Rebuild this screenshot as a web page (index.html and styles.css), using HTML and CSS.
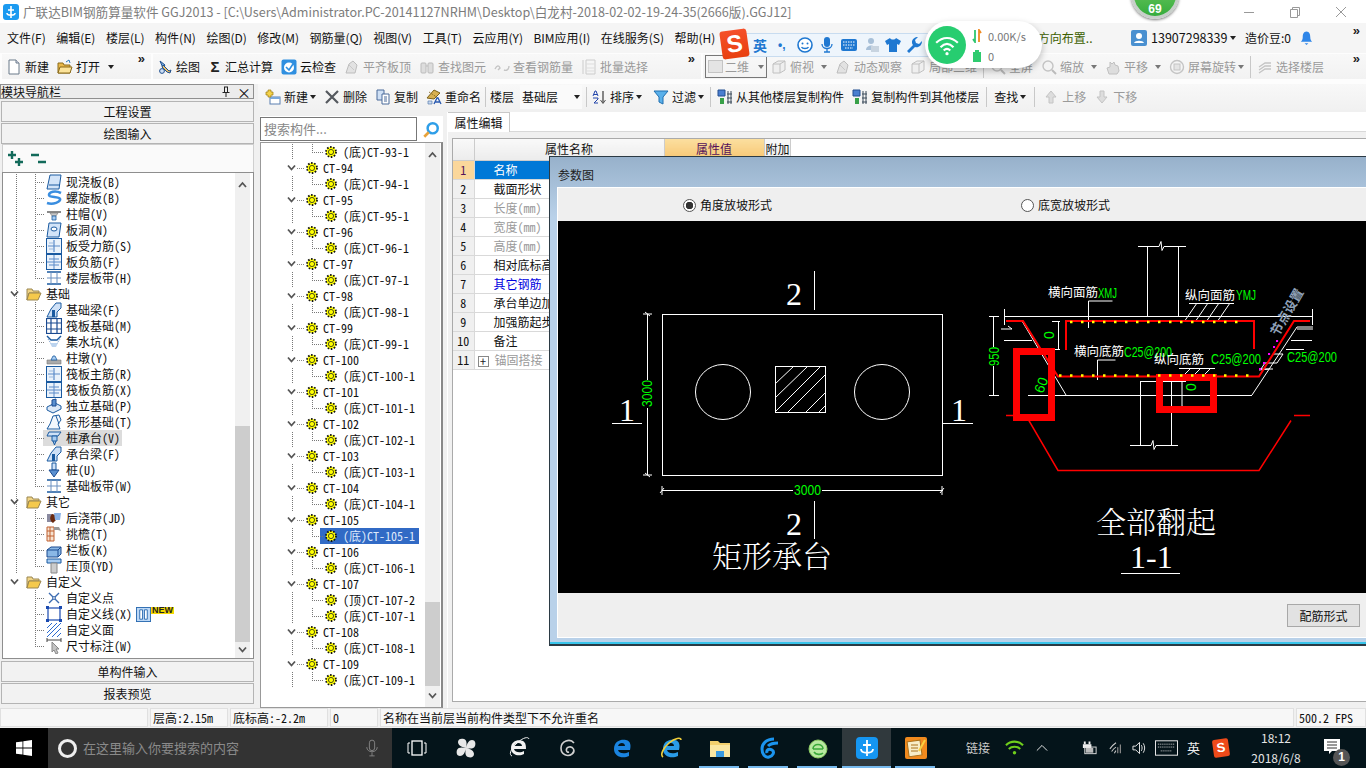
FILE: index.html
```html
<!DOCTYPE html>
<html lang="zh-CN">
<head>
<meta charset="utf-8">
<title>广联达BIM钢筋算量软件 GGJ2013</title>
<link rel="stylesheet" href="styles.css">
</head>
<body>
<svg class="defs" aria-hidden="true">
  <symbol id="i-doc" viewBox="0 0 16 16"><path d="M3 1h7l3 3v11H3z" fill="#fff" stroke="#6a7a8a"/><path d="M10 1v3h3" fill="#dde" stroke="#6a7a8a"/></symbol>
  <symbol id="i-open" viewBox="0 0 16 16"><path d="M1 4h5l1 2h6v8H1z" fill="#e8b84a" stroke="#8a6a1a"/><path d="M3 8h12l-2 6H1z" fill="#fbe39a" stroke="#8a6a1a"/><path d="M9 3l3-2 1 3" fill="none" stroke="#2a7ac0"/></symbol>
  <symbol id="i-draw" viewBox="0 0 16 16"><path d="M3 2l5 4-2 3z" fill="#7ab0e0" stroke="#1f4f8f"/><path d="M6 6l6 6 2-1-1 3-3-1-5-5z" fill="#f0c060" stroke="#1f4f8f"/><circle cx="5" cy="12" r="2.4" fill="#cfe0f5" stroke="#1f4f8f"/></symbol>
  <symbol id="i-cloud" viewBox="0 0 16 16"><rect x=".5" y=".5" width="15" height="15" rx="2" fill="#2f8fe0"/><circle cx="8" cy="8.5" r="5" fill="#fff"/><path d="M5 8l3 3 4-6" fill="none" stroke="#2f8fe0" stroke-width="1.6"/></symbol>
  <symbol id="i-gray" viewBox="0 0 16 16"><path d="M2 14l3-9 4-3 4 4-2 8z" fill="#e2e2e2" stroke="#bdbdbd"/><path d="M5 6l5 5" stroke="#c8c8c8"/></symbol>
  <symbol id="i-bino" viewBox="0 0 16 16"><rect x="2" y="4" width="5" height="10" rx="1" fill="#ddd" stroke="#bbb"/><rect x="9" y="4" width="5" height="10" rx="1" fill="#ddd" stroke="#bbb"/><path d="M7 7h2" stroke="#bbb"/></symbol>
  <symbol id="i-steel" viewBox="0 0 16 16"><path d="M1 10c2-4 4-4 5-1l-2 2M10 11c2 1 5 0 5-4" fill="none" stroke="#c4c4c4" stroke-width="1.4"/></symbol>
  <symbol id="i-batch" viewBox="0 0 16 16"><path d="M2 1v14M5 1h9v14H5z" fill="none" stroke="#ccc"/><path d="M5 5h9M5 9h9M5 12h9" stroke="#ddd"/></symbol>
  <symbol id="i-cube" viewBox="0 0 16 16"><path d="M2 5l5-3h7v9l-5 3H2z" fill="#efefef" stroke="#c0c0c0"/><path d="M2 5h7v9M9 5l5-3" fill="none" stroke="#c0c0c0"/></symbol>
  <symbol id="i-zoom" viewBox="0 0 16 16"><circle cx="7" cy="7" r="5" fill="#f4f4f4" stroke="#c4c4c4" stroke-width="1.4"/><path d="M11 11l4 4" stroke="#bbb" stroke-width="2"/></symbol>
  <symbol id="i-hand" viewBox="0 0 16 16"><path d="M4 15l-2-6 3-1V3l2 2 2-2 1 3 3 1 1 5-2 3z" fill="#ddd" stroke="#c0c0c0"/></symbol>
  <symbol id="i-rot" viewBox="0 0 16 16"><circle cx="8" cy="8" r="6.5" fill="none" stroke="#c4c4c4" stroke-width="1.4"/><rect x="5" y="5" width="6" height="6" fill="#e4e4e4" stroke="#c4c4c4"/></symbol>
  <symbol id="i-floor" viewBox="0 0 16 16"><path d="M2 8l6-4 6 0M2 11l6-4 6 0M2 14l6-4 6 0" fill="none" stroke="#c4c4c4" stroke-width="1.3"/></symbol>
  <symbol id="i-new" viewBox="0 0 16 16"><rect x="5" y="8" width="10" height="7" fill="#fff" stroke="#5a7fb0"/><path d="M5 8h10v2H5z" fill="#7aa8dc"/><path d="M3 1h3v2h2v3H6v2H3V6H1V3h2z" fill="#f4d24a" stroke="#9a7a10" stroke-width=".7"/></symbol>
  <symbol id="i-del" viewBox="0 0 16 16"><path d="M2 2l12 12M14 2L2 14" stroke="#55595f" stroke-width="2.2"/></symbol>
  <symbol id="i-copy" viewBox="0 0 16 16"><path d="M2 1h7v10H2z" fill="#cfe0f5" stroke="#4a6a9a"/><path d="M7 5h7v10H7z" fill="#fff" stroke="#4a6a9a"/><path d="M9 8h3M9 10h3M9 12h3" stroke="#4a6a9a"/></symbol>
  <symbol id="i-rename" viewBox="0 0 16 16"><path d="M1 9l7-8 6 3-6 6z" fill="#d8b050" stroke="#7a6018"/><path d="M3 3l9 6" stroke="#7a6018" stroke-dasharray="1 1"/><path d="M8 15l3-6h1l3 6M9.500 13h4" fill="none" stroke="#2a5ab0" stroke-width="1.300"/><path d="M2 15h4v-3H2z" fill="#c8d8ee" stroke="#5a7fb0" stroke-width=".7"/></symbol>
  <symbol id="i-sort" viewBox="0 0 16 16"><path d="M12 2v12" stroke="#555" stroke-width="1.4"/><path d="M9.5 11l2.5 3.5 2.5-3.5" fill="none" stroke="#555"/><path d="M2 7l2-5h1l2 5M3 5.5h3M2 9h5v1l-4 4h4" fill="none" stroke="#2244aa"/></symbol>
  <symbol id="i-filter" viewBox="0 0 16 16"><path d="M1 2h14L10 8v7l-4-2V8z" fill="#5ab0ea" stroke="#1f6fb0"/></symbol>
  <symbol id="i-floorcopy" viewBox="0 0 16 16"><path d="M1 1h7v6H1z" fill="#4a7fd0" stroke="#234e90"/><path d="M3 9h4v6H3z" fill="#38a048"/><path d="M11 2v13M14 2v13M10 5h5M10 9h5M10 13h5" stroke="#3a4a5a" fill="none"/></symbol>
  <symbol id="i-up" viewBox="0 0 16 16"><path d="M8 2l5 6h-3v6H6V8H3z" fill="#ddd" stroke="#c4c4c4"/></symbol>
  <symbol id="i-down" viewBox="0 0 16 16"><path d="M8 14l5-6h-3V2H6v6H3z" fill="#ddd" stroke="#c4c4c4"/></symbol>
  <symbol id="i-user" viewBox="0 0 16 16"><rect width="16" height="16" rx="2" fill="#4a90d0"/><circle cx="8" cy="6" r="3" fill="#fff"/><path d="M3 13c1-3 9-3 10 0z" fill="#fff"/></symbol>
  <symbol id="i-bell" viewBox="0 0 16 16"><path d="M8 1c3 0 4 3 4 6s1 4 2 5H2c1-1 2-2 2-5s1-6 4-6z" fill="#2f86e8"/><path d="M6 13.500h4l-2 2z" fill="#2f86e8"/></symbol>
  <symbol id="i-search" viewBox="0 0 16 16"><circle cx="9.500" cy="6.500" r="4.500" fill="#fff" stroke="#2e9ee8" stroke-width="2.200"/><path d="M6 10l-4 4" stroke="#e8a23a" stroke-width="2.400"/></symbol>
  <symbol id="i-plus" viewBox="0 0 16 16"><path d="M4 0v8M0 4h8M11 7v8M7 11h8" stroke="#126a5a" stroke-width="2.400"/></symbol>
  <symbol id="i-minus" viewBox="0 0 16 16"><path d="M0 4h8M7 11h8" stroke="#126a5a" stroke-width="2.400"/></symbol>
  <symbol id="i-folder" viewBox="0 0 16 16"><path d="M1 3h5l1 2h6v2H3l-2 7z" fill="#f0d486" stroke="#9a8650"/><path d="M3 7h12l-3 7H1z" fill="#f5c94c" stroke="#9a8650"/></symbol>
  <symbol id="i-gear" viewBox="0 0 12 12"><circle cx="6" cy="6" r="5" fill="#ff0" stroke="#111" stroke-width="1.800" stroke-dasharray="1.600 1.540"/><circle cx="6" cy="6" r="2.600" fill="#ff0" stroke="#222" stroke-width=".8"/></symbol>
  <symbol id="t-slab" viewBox="0 0 16 16"><path d="M4 1h11l-2 14H1z" fill="#d3e4f8" stroke="#1a5aa0"/><path d="M3 11h11" stroke="#1a5aa0"/></symbol>
  <symbol id="t-spiral" viewBox="0 0 16 16"><path d="M15 3C9 0 3 2 3 5s10 1 11 4-7 6-13 4" fill="none" stroke="#3a8ee0" stroke-width="2.600"/></symbol>
  <symbol id="t-cap" viewBox="0 0 16 16"><path d="M1 5h14v2H1z" fill="#8a8a8a"/><path d="M4 7h8l-2 3H6z" fill="#c8c8c8" stroke="#777" stroke-width=".6"/><path d="M6 10h4v4H6z" fill="#a9cdf2" stroke="#1a5aa0" stroke-width=".8"/></symbol>
  <symbol id="t-hole" viewBox="0 0 16 16"><path d="M3 1h12l-2 14H1z" fill="#d3e4f8" stroke="#1a5aa0"/><ellipse cx="8" cy="7" rx="3" ry="2" fill="#fff" stroke="#1a5aa0"/></symbol>
  <symbol id="t-bar" viewBox="0 0 16 16"><rect x=".5" y=".5" width="15" height="15" fill="#eaf2fb" stroke="#1a5aa0"/><path d="M8 2v12M2 8h12" stroke="#5a8ac8" stroke-width="1.200"/><path d="M3 5h4M3 11h4" stroke="#9ab8dc"/></symbol>
  <symbol id="t-neg" viewBox="0 0 16 16"><rect x=".5" y=".5" width="15" height="15" fill="#eaf2fb" stroke="#1a5aa0"/><path d="M8 1v14M1 8h14M3 5h10M3 11h10" stroke="#5a8ac8"/></symbol>
  <symbol id="t-band" viewBox="0 0 16 16"><path d="M1 2h14M1 14h14" stroke="#1a5aa0" stroke-width="1.400"/><path d="M5 2v12M11 2v12M1 8h14" stroke="#6a90c0"/></symbol>
  <symbol id="t-beam" viewBox="0 0 16 16"><path d="M1 15l4-8 5-6h5v5l-4 4v5H1z" fill="#cfe1f7" stroke="#1a5aa0"/><path d="M6 8h3v7H6z" fill="#1a5aa0"/></symbol>
  <symbol id="t-raft" viewBox="0 0 16 16"><rect x=".5" y=".5" width="15" height="15" fill="#fff" stroke="#1a4a90" stroke-width="1.200"/><path d="M1 5h14M1 11h14M5 1v14M11 1v14" stroke="#1a4a90" stroke-width="1.200"/></symbol>
  <symbol id="t-pit" viewBox="0 0 16 16"><path d="M1 2l4 4h6l4-4" fill="none" stroke="#1a5aa0" stroke-width="1.400"/><path d="M2 5l4 6h4l4-6" fill="none" stroke="#7aa0d0" stroke-dasharray="1.500 1"/><path d="M4 9l2 4h4l2-4" fill="#bcd4ef"/></symbol>
  <symbol id="t-pier" viewBox="0 0 16 16"><path d="M1 10h14v4H1z" fill="#aaa" stroke="#777" stroke-width=".6"/><path d="M5 10l2-4h2l2 4z" fill="#a9cdf2" stroke="#1a5aa0" stroke-width=".8"/></symbol>
  <symbol id="t-iso" viewBox="0 0 16 16"><path d="M1 9l8-4 6 3v3l-8 4-6-3z" fill="#dce9f8" stroke="#1a5aa0"/><path d="M6 8V2l4-1v7z" fill="#5a90d0" stroke="#1a4a90"/></symbol>
  <symbol id="t-strip" viewBox="0 0 16 16"><path d="M1 15l3-5 3-8 6-1 2 5-3 4 2 5z" fill="#f2f7fd" stroke="#1a5aa0"/><path d="M10 2l3 8" stroke="#1a5aa0"/></symbol>
  <symbol id="t-pilecap" viewBox="0 0 16 16"><path d="M3 2h12l-3 4H1z" fill="#cfe1f7" stroke="#1a5aa0"/><path d="M6 6h5v5H6zM7 11l1.500 4 1.500-4" fill="#a9cdf2" stroke="#1a5aa0"/></symbol>
  <symbol id="t-pile" viewBox="0 0 16 16"><path d="M6 1h4v7H6z" fill="#cfe1f7" stroke="#1a5aa0"/><path d="M3 8h10l-5 7z" fill="#5a90d0" stroke="#1a4a90"/></symbol>
  <symbol id="t-post" viewBox="0 0 16 16"><path d="M1 4h6v8H1z" fill="#8a8aa0"/><path d="M6 4c-3 3-2 7 1 9l3-3V5z" fill="#6a2a10"/><path d="M8 3h7l-1 7H9z" fill="#8ab2e6"/></symbol>
  <symbol id="t-eave" viewBox="0 0 16 16"><path d="M1 1h7v14H1z" fill="#f6e2d0" stroke="#c06030"/><path d="M1 5h7M1 10h7M4 1v14" stroke="#c06030"/><path d="M8 1h5l2 4-3-1H8z" fill="#999"/></symbol>
  <symbol id="t-rail" viewBox="0 0 16 16"><path d="M1 8l4-3h10v7l-3 3H1z" fill="#8ab8e6" stroke="#1a4a90"/><path d="M1 8h11v7M12 8l3-3" fill="none" stroke="#1a4a90"/></symbol>
  <symbol id="t-top" viewBox="0 0 16 16"><path d="M1 1h14v4H1z" fill="#a9cdf2" stroke="#1a5aa0"/><path d="M5 5h6v10H5z" fill="#ccc" stroke="#888"/></symbol>
  <symbol id="t-point" viewBox="0 0 16 16"><path d="M3 3l10 10M13 3L3 13" stroke="#3a6ab0" stroke-width="1.400"/><circle cx="8" cy="8" r="1.400" fill="#fff" stroke="#3a6ab0"/></symbol>
  <symbol id="t-line" viewBox="0 0 16 16"><rect x="2" y="2" width="12" height="12" fill="none" stroke="#1a4ab0" stroke-width="1.200"/><path d="M0 0h3v3H0zM13 0h3v3h-3zM0 13h3v3H0zM13 13h3v3h-3z" fill="#1a4ab0"/></symbol>
  <symbol id="t-face" viewBox="0 0 16 16"><path d="M1 6l5-5M1 11L11 1M1 15L15 1M6 15l9-9M11 15l4-4" stroke="#2a6ad0"/></symbol>
  <symbol id="t-dim" viewBox="0 0 16 16"><path d="M1 2h14M1 0v4M15 0v4" stroke="#444"/><path d="M6 4l7 7-3 0 2 4-2 1-2-4-2 2z" fill="#c4c4c4" stroke="#888"/></symbol>
  <symbol id="chev" viewBox="0 0 9 8"><path d="M1 1.500l3.500 4 3.500-4" fill="none" stroke="#555" stroke-width="1.800"/></symbol>
  <symbol id="sb-up" viewBox="0 0 9 8"><path d="M1 6l3.500-4 3.500 4" fill="none" stroke="#555" stroke-width="1.800"/></symbol>
</svg>

<div class="app">
  <header class="titlebar">
    <svg class="app-icon" viewBox="0 0 16 16"><rect width="16" height="16" rx="3" fill="#1b9af0"/><path d="M8 2v12M4 9c0 3 8 3 8 0M5 6h6" fill="none" stroke="#fff" stroke-width="1.600"/></svg>
    <span class="title-text">广联达BIM钢筋算量软件 GGJ2013 - [C:\Users\Administrator.PC-20141127NRHM\Desktop\白龙村-2018-02-02-19-24-35(2666版).GGJ12]</span>
    <div class="win-controls">
      <svg viewBox="0 0 12 12"><path d="M1 6.500h10" stroke="#999"/></svg>
      <svg viewBox="0 0 12 12"><path d="M1.500 3.500h7v8h-7zM3.500 3.500v-2h7v8h-2" fill="none" stroke="#999"/></svg>
      <svg viewBox="0 0 12 12"><path d="M1 1l10 10M11 1L1 11" stroke="#999"/></svg>
    </div>
  </header>

  <nav class="menubar">
    <span>文件(F)</span><span>编辑(E)</span><span>楼层(L)</span><span>构件(N)</span><span>绘图(D)</span><span>修改(M)</span><span>钢筋量(Q)</span><span>视图(V)</span><span>工具(T)</span><span>云应用(Y)</span><span>BIM应用(I)</span><span>在线服务(S)</span><span>帮助(H)</span>
    <span class="menu-green">方向布置..</span>
    <span class="menu-acct"><svg class="ico"><use href="#i-user"/></svg>13907298339<i class="caret"></i></span>
    <span class="menu-beans">造价豆:0</span>
    <svg class="ico menu-bell"><use href="#i-bell"/></svg>
    <span class="more">»</span>
  </nav>

  <div class="toolbars">
    <div class="tgroup tg-file">
      <span class="tool"><svg class="ico"><use href="#i-doc"/></svg>新建</span>
      <span class="tool"><svg class="ico"><use href="#i-open"/></svg>打开<i class="caret"></i></span>
      <span class="more">»</span>
    </div>
    <div class="tgroup tg-main">
      <span class="tool"><svg class="ico"><use href="#i-draw"/></svg>绘图</span>
      <span class="tool"><span class="sigma">Σ</span>汇总计算</span>
      <span class="tool"><svg class="ico"><use href="#i-cloud"/></svg>云检查</span>
      <span class="tool off"><svg class="ico"><use href="#i-gray"/></svg>平齐板顶</span>
      <span class="tool off"><svg class="ico"><use href="#i-bino"/></svg>查找图元</span>
      <span class="tool off"><svg class="ico"><use href="#i-steel"/></svg>查看钢筋量</span>
      <span class="tool off"><svg class="ico"><use href="#i-batch"/></svg>批量选择</span>
      <span class="more">»</span>
    </div>
    <div class="tgroup tg-view">
      <span class="view-select"><i class="view-swatch"></i>二维<i class="caret gray"></i></span>
      <span class="tool off"><svg class="ico"><use href="#i-cube"/></svg>俯视<i class="caret gray wide"></i></span>
      <span class="tool off"><svg class="ico"><use href="#i-gray"/></svg>动态观察</span>
      <span class="tool off"><svg class="ico"><use href="#i-cube"/></svg>局部三维</span>
      <i class="sep"></i>
      <span class="tool off"><svg class="ico"><use href="#i-zoom"/></svg>全屏</span>
      <span class="tool off"><svg class="ico"><use href="#i-zoom"/></svg>缩放<i class="caret gray wide"></i></span>
      <span class="tool off"><svg class="ico"><use href="#i-hand"/></svg>平移<i class="caret gray wide"></i></span>
      <span class="tool off"><svg class="ico"><use href="#i-rot"/></svg>屏幕旋转<i class="caret gray"></i></span>
      <i class="sep"></i>
      <span class="tool off"><svg class="ico"><use href="#i-floor"/></svg>选择楼层</span>
      <span class="more">»</span>
    </div>
  </div>

  <main class="workspace">
    <aside class="nav">
      <div class="nav-title"><span>模块导航栏</span><svg class="pin" viewBox="0 0 10 12"><path d="M3 1h4M3.500 1v5M6.500 1v5M1.500 6.500h7M5 7v4" fill="none" stroke="#222"/></svg><span class="x">×</span></div>
      <button class="nav-btn">工程设置</button>
      <button class="nav-btn">绘图输入</button>
      <div class="expand"><svg class="ico"><use href="#i-plus"/></svg><svg class="ico"><use href="#i-minus"/></svg></div>
      <div class="treebox nav-tree">
        <div class="rows">
          <div class="leaf cont"><svg class="ico"><use href="#t-slab"/></svg>现浇板(B)</div>
          <div class="leaf cont"><svg class="ico"><use href="#t-spiral"/></svg>螺旋板(B)</div>
          <div class="leaf cont"><svg class="ico"><use href="#t-cap"/></svg>柱帽(V)</div>
          <div class="leaf cont"><svg class="ico"><use href="#t-hole"/></svg>板洞(N)</div>
          <div class="leaf cont"><svg class="ico"><use href="#t-bar"/></svg>板受力筋(S)</div>
          <div class="leaf cont"><svg class="ico"><use href="#t-neg"/></svg>板负筋(F)</div>
          <div class="leaf last"><svg class="ico"><use href="#t-band"/></svg>楼层板带(H)</div>
          <div class="folder cont-top"><svg class="chev"><use href="#chev"/></svg><svg class="ico"><use href="#i-folder"/></svg>基础</div>
          <div class="leaf cont"><svg class="ico"><use href="#t-beam"/></svg>基础梁(F)</div>
          <div class="leaf cont"><svg class="ico"><use href="#t-raft"/></svg>筏板基础(M)</div>
          <div class="leaf cont"><svg class="ico"><use href="#t-pit"/></svg>集水坑(K)</div>
          <div class="leaf cont"><svg class="ico"><use href="#t-pier"/></svg>柱墩(Y)</div>
          <div class="leaf cont"><svg class="ico"><use href="#t-bar"/></svg>筏板主筋(R)</div>
          <div class="leaf cont"><svg class="ico"><use href="#t-neg"/></svg>筏板负筋(X)</div>
          <div class="leaf cont"><svg class="ico"><use href="#t-iso"/></svg>独立基础(P)</div>
          <div class="leaf cont"><svg class="ico"><use href="#t-strip"/></svg>条形基础(T)</div>
          <div class="leaf cont"><span class="sel"><svg class="ico"><use href="#t-pilecap"/></svg>桩承台(V)</span></div>
          <div class="leaf cont"><svg class="ico"><use href="#t-beam"/></svg>承台梁(F)</div>
          <div class="leaf cont"><svg class="ico"><use href="#t-pile"/></svg>桩(U)</div>
          <div class="leaf last"><svg class="ico"><use href="#t-band"/></svg>基础板带(W)</div>
          <div class="folder cont-top"><svg class="chev"><use href="#chev"/></svg><svg class="ico"><use href="#i-folder"/></svg>其它</div>
          <div class="leaf cont"><svg class="ico"><use href="#t-post"/></svg>后浇带(JD)</div>
          <div class="leaf cont"><svg class="ico"><use href="#t-eave"/></svg>挑檐(T)</div>
          <div class="leaf cont"><svg class="ico"><use href="#t-rail"/></svg>栏板(K)</div>
          <div class="leaf last"><svg class="ico"><use href="#t-top"/></svg>压顶(YD)</div>
          <div class="folder"><svg class="chev"><use href="#chev"/></svg><svg class="ico"><use href="#i-folder"/></svg>自定义</div>
          <div class="leaf-e cont"><svg class="ico"><use href="#t-point"/></svg>自定义点</div>
          <div class="leaf-e cont"><svg class="ico"><use href="#t-line"/></svg>自定义线(X)<svg class="ico newico" viewBox="0 0 16 16"><rect x=".5" y=".5" width="15" height="15" fill="#bcd8f6" stroke="#2a6ab0"/><path d="M4 3h3v10H4zM9 3h3v10H9z" fill="#fff" stroke="#2a6ab0"/></svg><b class="newtag">NEW</b></div>
          <div class="leaf-e cont"><svg class="ico"><use href="#t-face"/></svg>自定义面</div>
          <div class="leaf-e last"><svg class="ico"><use href="#t-dim"/></svg>尺寸标注(W)</div>
        </div>
        <div class="sb sb-nav"><svg class="sb-a"><use href="#sb-up"/></svg><i class="thumb"></i><svg class="sb-a"><use href="#chev"/></svg></div>
      </div>
      <button class="nav-btn first-after">单构件输入</button>
      <button class="nav-btn">报表预览</button>
    </aside>

    <section class="content">
      <div class="tgroup tg-ops">
        <span class="tool"><svg class="ico"><use href="#i-new"/></svg>新建<i class="caret"></i></span>
        <span class="tool"><svg class="ico"><use href="#i-del"/></svg>删除</span>
        <span class="tool"><svg class="ico"><use href="#i-copy"/></svg>复制</span>
        <span class="tool"><svg class="ico"><use href="#i-rename"/></svg>重命名</span>
        <i class="sep"></i>
        <span class="tool">楼层</span>
        <span class="floor-select">基础层<i class="caret"></i></span>
        <i class="sep"></i>
        <span class="tool t-sort"><svg class="ico"><use href="#i-sort"/></svg>排序<i class="caret"></i></span>
        <span class="tool"><svg class="ico"><use href="#i-filter"/></svg>过滤<i class="caret"></i></span>
        <i class="sep s13"></i>
        <span class="tool"><svg class="ico"><use href="#i-floorcopy"/></svg>从其他楼层复制构件</span>
        <span class="tool"><svg class="ico"><use href="#i-floorcopy"/></svg>复制构件到其他楼层</span>
        <i class="sep s15"></i>
        <span class="tool">查找<i class="caret"></i></span>
        <i class="sep s17"></i>
        <span class="tool off"><svg class="ico"><use href="#i-up"/></svg>上移</span>
        <span class="tool off"><svg class="ico"><use href="#i-down"/></svg>下移</span>
      </div>

      <div class="split">
        <div class="comp-col">
          <div class="search"><span class="search-box">搜索构件...</span><svg class="ico"><use href="#i-search"/></svg></div>
          <div class="treebox ct-tree">
            <div class="rows">
              <div class="ct-leaf"><svg class="gear"><use href="#i-gear"/></svg>(底)CT-93-1</div>
              <div class="ct-g"><svg class="chev"><use href="#chev"/></svg><svg class="gear"><use href="#i-gear"/></svg>CT-94</div>
              <div class="ct-leaf"><svg class="gear"><use href="#i-gear"/></svg>(底)CT-94-1</div>
              <div class="ct-g"><svg class="chev"><use href="#chev"/></svg><svg class="gear"><use href="#i-gear"/></svg>CT-95</div>
              <div class="ct-leaf"><svg class="gear"><use href="#i-gear"/></svg>(底)CT-95-1</div>
              <div class="ct-g"><svg class="chev"><use href="#chev"/></svg><svg class="gear"><use href="#i-gear"/></svg>CT-96</div>
              <div class="ct-leaf"><svg class="gear"><use href="#i-gear"/></svg>(底)CT-96-1</div>
              <div class="ct-g"><svg class="chev"><use href="#chev"/></svg><svg class="gear"><use href="#i-gear"/></svg>CT-97</div>
              <div class="ct-leaf"><svg class="gear"><use href="#i-gear"/></svg>(底)CT-97-1</div>
              <div class="ct-g"><svg class="chev"><use href="#chev"/></svg><svg class="gear"><use href="#i-gear"/></svg>CT-98</div>
              <div class="ct-leaf"><svg class="gear"><use href="#i-gear"/></svg>(底)CT-98-1</div>
              <div class="ct-g"><svg class="chev"><use href="#chev"/></svg><svg class="gear"><use href="#i-gear"/></svg>CT-99</div>
              <div class="ct-leaf"><svg class="gear"><use href="#i-gear"/></svg>(底)CT-99-1</div>
              <div class="ct-g"><svg class="chev"><use href="#chev"/></svg><svg class="gear"><use href="#i-gear"/></svg>CT-100</div>
              <div class="ct-leaf"><svg class="gear"><use href="#i-gear"/></svg>(底)CT-100-1</div>
              <div class="ct-g"><svg class="chev"><use href="#chev"/></svg><svg class="gear"><use href="#i-gear"/></svg>CT-101</div>
              <div class="ct-leaf"><svg class="gear"><use href="#i-gear"/></svg>(底)CT-101-1</div>
              <div class="ct-g"><svg class="chev"><use href="#chev"/></svg><svg class="gear"><use href="#i-gear"/></svg>CT-102</div>
              <div class="ct-leaf"><svg class="gear"><use href="#i-gear"/></svg>(底)CT-102-1</div>
              <div class="ct-g"><svg class="chev"><use href="#chev"/></svg><svg class="gear"><use href="#i-gear"/></svg>CT-103</div>
              <div class="ct-leaf"><svg class="gear"><use href="#i-gear"/></svg>(底)CT-103-1</div>
              <div class="ct-g"><svg class="chev"><use href="#chev"/></svg><svg class="gear"><use href="#i-gear"/></svg>CT-104</div>
              <div class="ct-leaf"><svg class="gear"><use href="#i-gear"/></svg>(底)CT-104-1</div>
              <div class="ct-g"><svg class="chev"><use href="#chev"/></svg><svg class="gear"><use href="#i-gear"/></svg>CT-105</div>
              <div class="ct-leaf active"><span class="ct-sel"><svg class="gear"><use href="#i-gear"/></svg>(底)CT-105-1</span></div>
              <div class="ct-g"><svg class="chev"><use href="#chev"/></svg><svg class="gear"><use href="#i-gear"/></svg>CT-106</div>
              <div class="ct-leaf"><svg class="gear"><use href="#i-gear"/></svg>(底)CT-106-1</div>
              <div class="ct-g"><svg class="chev"><use href="#chev"/></svg><svg class="gear"><use href="#i-gear"/></svg>CT-107</div>
              <div class="ct-leaf"><svg class="gear"><use href="#i-gear"/></svg>(顶)CT-107-2</div>
              <div class="ct-leaf"><svg class="gear"><use href="#i-gear"/></svg>(底)CT-107-1</div>
              <div class="ct-g"><svg class="chev"><use href="#chev"/></svg><svg class="gear"><use href="#i-gear"/></svg>CT-108</div>
              <div class="ct-leaf"><svg class="gear"><use href="#i-gear"/></svg>(底)CT-108-1</div>
              <div class="ct-g"><svg class="chev"><use href="#chev"/></svg><svg class="gear"><use href="#i-gear"/></svg>CT-109</div>
              <div class="ct-leaf"><svg class="gear"><use href="#i-gear"/></svg>(底)CT-109-1</div>
            </div>
            <div class="sb sb-ct"><svg class="sb-a"><use href="#sb-up"/></svg><i class="thumb"></i><svg class="sb-a"><use href="#chev"/></svg></div>
          </div>
        </div>

        <div class="props">
          <div class="tabs"><span class="tab">属性编辑</span></div>
          <div class="prop-frame">
            <table class="prop-table">
              <colgroup><col class="c-num"><col class="c-name"><col class="c-val"><col class="c-add"><col></colgroup>
              <thead><tr><th></th><th>属性名称</th><th class="val-h">属性值</th><th class="add-h">附加</th><th></th></tr></thead>
              <tbody>
                <tr class="cur"><td class="num">1</td><td class="name">名称</td><td></td><td></td><td></td></tr>
                <tr><td class="num">2</td><td class="name">截面形状</td><td></td><td></td><td></td></tr>
                <tr class="dim"><td class="num">3</td><td class="name">长度(mm)</td><td></td><td></td><td></td></tr>
                <tr class="dim"><td class="num">4</td><td class="name">宽度(mm)</td><td></td><td></td><td></td></tr>
                <tr class="dim"><td class="num">5</td><td class="name">高度(mm)</td><td></td><td></td><td></td></tr>
                <tr><td class="num">6</td><td class="name">相对底标高(m)</td><td></td><td></td><td></td></tr>
                <tr class="blue"><td class="num">7</td><td class="name">其它钢筋</td><td></td><td></td><td></td></tr>
                <tr><td class="num">8</td><td class="name">承台单边加强筋</td><td></td><td></td><td></td></tr>
                <tr><td class="num">9</td><td class="name">加强筋起步(mm)</td><td></td><td></td><td></td></tr>
                <tr><td class="num">10</td><td class="name">备注</td><td></td><td></td><td></td></tr>
                <tr class="dim"><td class="num">11</td><td class="name expand-cell"><i class="plusbox">+</i>锚固搭接</td><td></td><td></td><td></td></tr>
              </tbody>
            </table>
          </div>
        </div>
      </div>
    </section>
  </main>

  <footer class="status">
    <span class="st st1"></span><span class="st st2">层高:2.15m</span><span class="st st3">底标高:-2.2m</span><span class="st st4">0</span><span class="st st5">名称在当前层当前构件类型下不允许重名</span><span class="st st6">500.2 FPS</span>
  </footer>

  <div class="taskbar">
    <div class="start"><svg viewBox="0 0 16 16"><path d="M0 2.300l6.500-.9v6.200H0zM7.300 1.300L16 0v7.600H7.300zM0 8.400h6.500v6.200L0 13.700zM7.300 8.400H16V16l-8.700-1.200z" fill="#fff"/></svg></div>
    <div class="tsearch"><i class="cortana"></i><span>在这里输入你要搜索的内容</span><svg class="mic" viewBox="0 0 16 20"><rect x="5" y="1" width="6" height="12" rx="3" fill="none" stroke="#8a8a8a"/><path d="M2 9c0 7 12 7 12 0M8 15v4M5 19h6" fill="none" stroke="#8a8a8a"/></svg></div>
    <div class="task-apps">
      <span class="tapp tview"><svg viewBox="0 0 20 16"><rect x="5" y="1" width="10" height="14" fill="none" stroke="#fff" stroke-width="1.300"/><path d="M3 3H1v10h2M17 3h2v10h-2" fill="none" stroke="#fff"/></svg></span>
      <span class="tapp"><svg viewBox="0 0 22 22"><path d="M11 11C6 10 3 8 3 5s3-4 6-3 3 5 2 9zM11 11c1-5 3-8 6-8s4 3 3 6-5 3-9 2zM11 11c5 1 8 3 8 6s-3 4-6 3-3-5-2-9zM11 11c-1 5-3 8-6 8s-4-3-3-6 5-3 9-2z" fill="#e8e8e8"/></svg></span>
      <span class="tapp"><svg viewBox="0 0 22 22"><path d="M18 12H6c1 4 7 4 10 2v3c-5 3-13 1-13-6s7-9 12-7c3 2 3 5 3 8zM6 9h8c0-4-7-4-8 0z" fill="#f2f2f2"/><path d="M4 19C1 18 2 13 8 7s12-8 13-5" fill="none" stroke="#f2f2f2"/></svg></span>
      <span class="tapp"><svg viewBox="0 0 22 22"><path d="M17 6c-4-5-13-2-13 5s7 9 11 6 1-8-3-7-3 6 0 5" fill="none" stroke="#cfcfcf" stroke-width="1.600"/></svg></span>
      <span class="tapp"><svg viewBox="0 0 22 22"><path d="M19 13H7c1 4 7 4 11 2v4c-6 3-15 1-15-7S10 2 15 3s5 6 4 10zM7 9h7c0-4-6-4-7 0z" fill="#1a84e0"/></svg></span>
      <span class="tapp"><svg viewBox="0 0 22 22"><path d="M19 13H7c1 4 7 4 11 2v4c-6 3-15 1-15-7S10 2 15 3s5 6 4 10zM7 9h7c0-4-6-4-7 0z" fill="#2a9ce8"/><path d="M3 20C0 18 3 11 9 6s12-6 12-3" fill="none" stroke="#f2cf3a" stroke-width="1.600"/></svg></span>
      <span class="tapp run"><svg viewBox="0 0 22 22"><path d="M1 4h8l2 2h10v14H1z" fill="#f3d06e"/><path d="M1 8h20v12H1z" fill="#fbe7a2"/><path d="M7 14h8v6H7z" fill="#3a9ae0"/></svg></span>
      <span class="tapp run"><svg viewBox="0 0 22 22"><path d="M16 2C8 2 4 7 4 12s3 9 7 8 6-5 3-7-6 0-5 3M10 9c3-3 6-3 10-3" fill="none" stroke="#1b94ee" stroke-width="3"/></svg></span>
      <span class="tapp run"><svg viewBox="0 0 22 22"><circle cx="11" cy="12" r="9" fill="#b8e8a0" stroke="#8acb60"/><path d="M6 12h10M6 12c0-6 10-6 10 0M7 15c2 3 7 3 9 1" fill="none" stroke="#3aa83a" stroke-width="1.600"/></svg></span>
      <span class="tapp run active"><svg viewBox="0 0 22 22"><rect width="22" height="22" rx="4" fill="#1596f2"/><path d="M11 3v16M5 12c0 5 12 5 12 0M7 8h8" fill="none" stroke="#fff" stroke-width="1.800"/></svg></span>
      <span class="tapp run"><svg viewBox="0 0 22 22"><rect width="22" height="22" rx="2" fill="#f08a1e"/><rect x="3" y="4" width="13" height="15" fill="#f7edc8" stroke="#a8701a" transform="rotate(-8 9 11)"/><path d="M6 8h7M6 11h7M6 14h7" stroke="#a8701a"/><path d="M14 14L20 3" stroke="#f8d040" stroke-width="2"/></svg></span>
    </div>
    <div class="tray">
      <span class="tray-link">链接</span>
      <svg class="t-wifi" viewBox="0 0 20 16"><path d="M1 5c5-5 13-5 18 0M4 9c3-3 9-3 12 0" fill="none" stroke="#6fce1c" stroke-width="2.200"/><circle cx="10" cy="13" r="1.800" fill="#6fce1c"/></svg>
      <svg class="t-up" viewBox="0 0 14 8"><path d="M1 7l6-6 6 6" fill="none" stroke="#eee" stroke-width="1.100"/></svg>
      <svg class="t-batt" viewBox="0 0 18 16"><path d="M3 1h2v3H3zM8 1h2v3H8z" fill="#eee"/><path d="M2 4h9v4H2z" fill="#eee"/><rect x="4" y="7" width="12" height="7" fill="none" stroke="#ddd"/><path d="M5 8h8v5H5z" fill="#bbb"/></svg>
      <svg class="t-net" viewBox="0 0 16 16"><path d="M1 9c2-3 4-5 7-7M3 12c2-3 3-4 5-5M6 14c1-1 1-2 2-3" fill="none" stroke="#ccc" stroke-width="1.200"/><path d="M10 7v7M13 4v10" stroke="#888" stroke-width="1.400"/></svg>
      <svg class="t-vol" viewBox="0 0 16 16"><path d="M1 6h3l4-4v12l-4-4H1z" fill="none" stroke="#eee"/><path d="M10 5c1 2 1 4 0 6M12 3c2 3 2 7 0 10" fill="none" stroke="#eee"/></svg>
      <svg class="t-kbd" viewBox="0 0 24 16"><rect x=".5" y=".5" width="23" height="15" fill="none" stroke="#eee"/><path d="M3 4h18M3 7h18M6 11h12" stroke="#ddd" stroke-dasharray="1 1"/></svg>
      <span class="tray-en">英</span>
      <span class="sogou-tray">S</span>
      <span class="clock"><span>18:12</span><span>2018/6/8</span></span>
      <span class="notif"><svg viewBox="0 0 16 16"><path d="M0 0h16v12H8l-3 3v-3H0z" fill="#fff"/><path d="M3 3h10M3 6h10M3 9h10" stroke="#333"/></svg><b>1</b></span>
    </div>
  </div>
</div>

<div class="dialog">
  <div class="dlg-title">参数图</div>
  <div class="dlg-body">
    <div class="radios">
      <span class="radio on"><i></i>角度放坡形式</span>
      <span class="radio"><i></i>底宽放坡形式</span>
    </div>
    <svg class="cad" viewBox="557 221 809 372">
      <g class="w">
        <rect x="661.500" y="314.500" width="280" height="161"/>
        <circle cx="722" cy="392" r="27.500"/><circle cx="881" cy="392" r="27.500"/>
        <rect x="774.500" y="366.500" width="50" height="46"/>
        <path d="M774 384l19-18M774 398l33-32M774 412l46-46M787 412l38-38M805 412l20-20M818 412l7-7"/>
        <path d="M646.500 314v66M646.500 408v67M642 314h9M642 475h9M644 312l5 4M644 473l5 4"/>
        <path d="M661 490.500h131M821 490.500h121M661 486v9M941 486v9M659 493l4-5M939 493l4-5"/>
        <path d="M813.500 271v39M813.500 501v38M611 423.500h30M942 423.500h30"/>
      </g>
      <text class="cad-num" x="785" y="305">2</text>
      <text class="cad-num" x="785" y="535">2</text>
      <text class="cad-num" x="618" y="421">1</text>
      <text class="cad-num" x="950" y="421">1</text>
      <text class="cad-big" x="711" y="567">矩形承台</text>
      <text class="cad-g" x="793" y="495" textLength="27" lengthAdjust="spacingAndGlyphs">3000</text>
      <text class="cad-g" transform="translate(651 407) rotate(-90)" textLength="27" lengthAdjust="spacingAndGlyphs">3000</text>

      <g class="w">
        <path d="M1137 246.500h21l2-5 1 9 2-4h22M1146.500 246v71M1177.500 246v71"/>
        <path d="M1003 316.500h309M1003.500 309v16M1311.500 309v16"/>
        <path d="M1021 321l44 74M1251 395l45-68h16M1027 395.500h224M1000 329h11l-4-3M1296 329h16M1003 340.500h28M1290 340.500h21"/>
        <path d="M992.500 316v31M992.500 366v29M988 316.500h10M988 395.500h10M1051 321.500h8M1057.500 321v28M1051 349.500h8"/>
        <path d="M1139.500 381v65M1170.500 381v65M1139 381.500h46M1129 445.500h21l2-5 1 9 2-4h22M1181 381v25l4 3"/>
        <path d="M1087.500 328v-27h24M1096.500 380v-20h18M1188 303.500h45M1196 303l-13 19M1207 303l-13 19M1218 303l-13 19M1229 303l-13 19"/>
        <path d="M1178 368.500h36M1190 368l-8 8M1200 368l-8 8M1210 368l-8 8M1285 349.500h18M1272 354h10l-6 9h-12l-4 6h12M1258 370l10-1"/>
      </g>
      <g class="r">
        <path d="M1005 321h17l35 55.500h201l35-55.500h16"/>
        <path d="M1065 350v-29h188v28"/>
      </g>
      <g class="r thin">
        <path d="M1005 415.500h20l32 55h201l32-50M1293 415.500h16"/>
      </g>
      <g class="rbox">
        <rect x="1015.500" y="351.500" width="35" height="66"/>
        <rect x="1158.500" y="377.500" width="54" height="32"/>
      </g>
      <path class="dots-y" d="M1069 322h169M1058 375.500h197"/>
      <path class="dots-m" d="M1259 369h.1M1263 363h.1M1268 354h.1M1273 347h.1M1276 341h.1"/>
      <text class="cad-w" x="1047" y="297">横向面筋</text>
      <text class="cad-g" x="1097" y="298" textLength="19" lengthAdjust="spacingAndGlyphs">XMJ</text>
      <text class="cad-w" x="1184" y="300">纵向面筋</text>
      <text class="cad-g" x="1235" y="300" textLength="20" lengthAdjust="spacingAndGlyphs">YMJ</text>
      <text class="cad-w" x="1073" y="356">横向底筋</text>
      <text class="cad-g" x="1123" y="357" textLength="48" lengthAdjust="spacingAndGlyphs">C25@200</text>
      <text class="cad-w" x="1153" y="364">纵向底筋</text>
      <text class="cad-g" x="1210" y="364" textLength="50" lengthAdjust="spacingAndGlyphs">C25@200</text>
      <text class="cad-g" x="1286" y="362" textLength="50" lengthAdjust="spacingAndGlyphs">C25@200</text>
      <text class="cad-note" transform="translate(1277 337) rotate(-60)">节点设置</text>
      <text class="cad-g" transform="translate(998 366) rotate(-90)" textLength="19" lengthAdjust="spacingAndGlyphs">950</text>
      <text class="cad-g" transform="translate(1053 339) rotate(-90)">0</text>
      <text class="cad-g" transform="translate(1042 394) rotate(-70)">60</text>
      <text class="cad-g" transform="translate(1195 391) rotate(-90)">0</text>
      <text class="cad-big" x="1095" y="533">全部翻起</text>
      <text class="cad-num" x="1129" y="568">1-1</text>
      <path class="w" d="M1120 573.500h59"/>
    </svg>
    <div class="dlg-foot"><button class="rebar-btn">配筋形式</button></div>
  </div>
</div>

<div class="badge69"><span>69</span></div>

<div class="sogou">
  <span class="s-logo">S</span>
  <span class="s-en">英</span>
  <span class="s-dot">•,</span>
  <svg viewBox="0 0 16 16"><circle cx="8" cy="8" r="7" fill="#fff" stroke="#1f78d1" stroke-width="1.600"/><circle cx="5.500" cy="6.500" r="1" fill="#1f78d1"/><circle cx="10.500" cy="6.500" r="1" fill="#1f78d1"/><path d="M4.500 10c1 2 6 2 7 0" fill="none" stroke="#1f78d1" stroke-width="1.300"/></svg>
  <svg viewBox="0 0 16 16"><rect x="5" y="0" width="6" height="10" rx="3" fill="#1f78d1"/><path d="M3 7c0 6 10 6 10 0M8 12v3M5 15h6" fill="none" stroke="#1f78d1" stroke-width="1.300"/></svg>
  <svg viewBox="0 0 16 16"><rect x="0" y="2" width="16" height="12" rx="2" fill="#1f78d1"/><path d="M2 5h12M2 8h12M4 11h8" stroke="#fff" stroke-dasharray="1.500 1"/></svg>
  <svg viewBox="0 0 16 16"><circle cx="8" cy="4" r="3" fill="#a8c0d8"/><path d="M3 13c0-6 10-6 10 0z" fill="#a8c0d8"/><rect x="8" y="9" width="8" height="6" fill="#c8d4e0"/></svg>
  <svg viewBox="0 0 16 16"><path d="M5 1L0 4l2 4 2-1v8h8V7l2 1 2-4-5-3c-1 2-5 2-6 0z" fill="#1f78d1"/></svg>
  <svg viewBox="0 0 16 16"><path d="M15 4l-3 3-3-1-1-3 3-3C8 0 5 2 5 5c0 1 0 2 1 3l-6 6 2 2 6-6c3 1 7-1 7-6z" fill="#1f78d1"/></svg>
</div>

<div class="netpill">
  <span class="net-circle"><svg viewBox="0 0 24 24"><path d="M2 10c6-6 14-6 20 0M6 14c4-4 8-4 12 0" fill="none" stroke="#fff" stroke-width="2"/><path d="M9 17c2-2 4-2 6 0" fill="none" stroke="#fff" stroke-width="2"/><circle cx="12" cy="20" r="1.500" fill="#fff"/></svg></span>
  <span class="net-info">
    <span class="net-row"><svg viewBox="0 0 10 14"><path d="M3 1v12L1 10" fill="none" stroke="#2fc66e" stroke-width="1.800"/><path d="M7 13V1l2 3" fill="none" stroke="#f08a20" stroke-width="1.800"/></svg>0.00K/s</span>
    <span class="net-row"><svg viewBox="0 0 10 14"><rect x="1" y="3" width="8" height="10" fill="#2fcb6f"/><path d="M3 1h4v2H3z" fill="#2fcb6f"/></svg>0</span>
  </span>
</div>
</body>
</html>
```
FILE: styles.css
```css
*{box-sizing:border-box}
html,body{margin:0;width:1366px;height:768px;overflow:hidden}
body{position:relative;background:#f0f0f0;font:12px/16px "Noto Sans CJK SC","Liberation Sans",sans-serif;color:#111}
.defs{position:absolute;width:0;height:0}
svg{display:block;flex:none}
i{font-style:normal;display:block}
button{font:inherit;color:inherit;cursor:default}
.app{display:flex;flex-direction:column;width:1366px;height:768px}
.ico{width:16px;height:16px}

/* title + menu */
.titlebar{height:23px;background:#fff;display:flex;align-items:center;padding-left:3px;color:#7c7c7c;flex:none}
.app-icon{width:16px;height:16px;margin-right:4px}
.title-text{white-space:nowrap;font-size:12.6px}
.win-controls{margin-left:auto;display:flex;gap:34px;padding-right:19px}
.win-controls svg{width:12px;height:12px}
.menubar{height:30px;background:#f5f5f5;display:flex;align-items:center;padding-left:7px;gap:10.5px;flex:none;white-space:nowrap;position:relative}
.menu-green{color:#3d6000;margin-left:312px}
.menu-acct{display:flex;align-items:center;gap:4px;margin-left:28px;font-size:12.5px}
.menu-beans{margin-left:-2px}
.menu-bell{margin-left:-2px;width:15px}
.more{font:bold 13px/14px "Liberation Sans",sans-serif;color:#222;margin-left:auto;padding-right:6px;align-self:flex-start;margin-top:-2px}
.menubar .more{margin-top:1px}
.caret{display:inline-block;width:0;height:0;border:3px solid transparent;border-top:4px solid #222;border-bottom:0;margin-left:-1px;vertical-align:middle}
.caret.gray{border-top-color:#777}
.caret.wide{margin-left:4px}
.tg-file .caret{margin-left:5px}

/* toolbars */
.toolbars{height:31px;display:flex;align-items:flex-start;background:#fdfdfd;flex:none;padding-top:1px;padding-left:2px}
.tgroup{display:flex;align-items:center;gap:8px;height:25px;background:linear-gradient(#f8f8f8,#f2f2f2);white-space:nowrap}
.tg-file{width:149px;padding-left:4px;margin-right:2px;flex:none}
.tg-main{width:548px;padding-left:4px;margin-right:2px;flex:none}
.tg-view{flex:1;min-width:0;padding-left:2px}
.tg-view .sep{margin:0 -2px}
.tool{display:flex;align-items:center;gap:3px}
.tool.off{color:#9a9a9a}
.sigma{font:bold 15px/16px "Liberation Sans",sans-serif;width:14px;text-align:center;color:#222}
.sep{width:1px;height:22px;background:#c8c8c8;flex:none}
.view-select{width:62px;height:23px;border:1px solid #777;display:flex;align-items:center;color:#9a9a9a;padding-left:2px;gap:2px;margin-right:-4px;flex:none}
.view-swatch{width:15px;height:13px;background:#e4e4e4;border:1px solid #c4c4c4}
.view-select .caret{margin-left:auto;margin-right:2px}

/* workspace */
.workspace{flex:1;display:flex;min-height:0;background:#f0f0f0}
.nav{width:254px;flex:none;display:flex;flex-direction:column}
.nav-title{height:15px;background:#ececec;border:1px solid #8f8f8f;border-width:1px;display:flex;align-items:center;font-size:12px;line-height:14px;padding-left:0;color:#111}
.pin{margin-left:auto;margin-right:4px;width:10px;height:12px}
.x{width:18px;text-align:center;font-size:14px}
.nav-btn{height:21px;margin:1px 0 0 1px;width:253px;padding:0;background:#f2f2f2;border:1px solid #b4b4b4;line-height:18px;text-align:center}
.nav-title + .nav-btn{margin-top:2px}
.expand{height:28px;background:#fafafa;border:1px solid #cfcfcf;border-width:1px 1px 0;margin-left:2px;width:252px;display:flex;align-items:center;gap:7px;padding-left:5px}
.treebox{background:#fff;border:1px solid #8e8e8e;display:flex;min-height:0}
.nav-tree{height:487px;margin-left:2px;width:252px;font-family:"Noto Sans Mono CJK SC","Noto Sans CJK SC","Liberation Mono",monospace}
.rows{flex:1;min-width:0;overflow:hidden;padding-top:1px}
.leaf,.leaf-e,.folder{height:16px;display:flex;align-items:center;white-space:nowrap;position:relative}
.leaf,.leaf-e{padding-left:43px;gap:4px}
.folder{padding-left:7px;gap:7px}
.folder .ico{margin-right:-3px}
.leaf,.folder.cont-top{background-image:repeating-linear-gradient(#777 0 1px,transparent 1px 2px);background-size:1px 100%;background-position:13px 0;background-repeat:no-repeat}
.leaf::before,.leaf-e::before{content:"";position:absolute;left:32px;top:0;width:10px;height:100%;background:
  repeating-linear-gradient(#777 0 1px,transparent 1px 2px) 0 0/1px 100% no-repeat,
  repeating-linear-gradient(90deg,#777 0 1px,transparent 1px 2px) 0 8px/100% 1px no-repeat}
.leaf.last::before,.leaf-e.last::before{height:9px}
.chev{width:9px;height:8px}
.sel{display:flex;align-items:center;gap:4px;background:#dcdcdc;margin-left:-3px;padding:0 2px 0 3px;height:16px}
.newico{margin:0;height:15px;width:15px}
.newtag{font:bold 9px/7px "Liberation Sans",sans-serif;background:#f6d900;color:#222;padding:0 1px;margin:-8px 0 0 -4px}
.sb{width:15px;background:#f0f0f0;flex:none;display:flex;flex-direction:column;align-items:center;padding-top:8px}
.sb .sb-a{width:9px;height:8px}
.sb .thumb{width:15px;background:#cdcdcd}
.sb-nav{margin:0 3px 0 0}
.sb-nav .thumb{margin-top:237px;height:216px;margin-bottom:4px}
.first-after{margin-top:2px}

/* content */
.content{flex:1;min-width:0;display:flex;flex-direction:column;padding-left:4px}
.tg-ops{height:26px;margin-bottom:2px;padding-left:7px;background:linear-gradient(#f8f8f8,#f1f1f1);flex:none}
.tg-ops .sep{height:20px;margin:0 -4px}
.tg-ops .sep.s13{margin:0 -2px}
.tg-ops .sep.s15{margin:0 -1px}
.tg-ops .sep.s17{margin:0}
.t-sort{margin-right:3px}
.floor-select{width:62px;height:24px;background:#fafafa;display:flex;align-items:center;padding-left:2px;margin-left:-2px;flex:none}
.floor-select .caret{margin-left:auto;margin-right:2px}
.split{flex:1;min-height:0;display:flex}
.comp-col{width:185px;flex:none;padding:4px 0 0 2px;display:flex;flex-direction:column}
.search{height:26px;display:flex;align-items:flex-start;gap:5px;background:#fff;padding-top:1px;flex:none}
.search-box{width:157px;height:24px;border:1px solid #777;color:#888;padding:3px;font-size:13px;line-height:16px;background:#fff;flex:none}
.search .ico{margin-top:4px;width:18px;height:18px}
.ct-tree{flex:1;min-height:0;border-color:#999;border-right:2px solid #888;font-family:"Noto Sans Mono CJK SC","Noto Sans CJK SC","Liberation Mono",monospace}
.ct-g,.ct-leaf{height:16px;display:flex;align-items:center;white-space:nowrap;position:relative}
.gear{width:12px;height:12px}
.ct-g{padding-left:26px}
.ct-g .gear{margin:0 5px 0 10px}
.ct-g::after{content:"";position:absolute;left:36px;top:8px;width:8px;height:1px;background:repeating-linear-gradient(90deg,#888 0 1px,transparent 1px 2px)}
.ct-leaf{padding-left:64px;background:repeating-linear-gradient(#777 0 1px,transparent 1px 2px) 31px 0/1px 100% no-repeat}
.ct-leaf .gear{margin-right:6px}
.ct-leaf::before{content:"";position:absolute;left:51px;top:0;width:11px;height:9px;background:
  repeating-linear-gradient(#777 0 1px,transparent 1px 2px) 0 0/1px 100% no-repeat,
  repeating-linear-gradient(90deg,#777 0 1px,transparent 1px 2px) 0 8px/100% 1px no-repeat}
.ct-sel{background:#316ac5;color:#dfe9fb;margin-left:-5px;padding:0 0 0 5px;width:99px;height:16px;display:flex;align-items:center}
.sb-ct{background:#f0f0f0;margin-right:1px}
.sb-ct .thumb{margin-top:443px;height:84px;margin-bottom:6px}

.props{flex:1;min-width:0;display:flex;flex-direction:column;margin-left:4px;background:#f0f0f0;border-left:1px solid #fff}
.tabs{height:20px;background:#fff;border-bottom:1px solid #d8d8d8;flex:none;display:flex}
.tab{width:62px;height:20px;background:#fff;border:1px solid #c8c8c8;border-width:1px 1px 0 1px;text-align:center;line-height:19px;border-left:0}
.prop-frame{flex:1;min-height:0;background:#fff;margin:6px 0 6px 4px;border:1px solid #aaa;border-right:0;position:relative}
.prop-table{border-collapse:collapse;table-layout:fixed;width:914px;background:#fff;font-family:"Noto Sans Mono CJK SC","Noto Sans CJK SC","Liberation Mono",monospace}
.c-num{width:21px}.c-name{width:190px}.c-val{width:100px}.c-add{width:26px}
.prop-table th{height:21px;font-weight:400;background:linear-gradient(#f9f9f9,#ececec);padding:0;border-right:1px solid #ccc;border-bottom:1px solid #ccc}
.prop-table .val-h{background:linear-gradient(#fbdf9f,#f7c571);color:#55125a}
.prop-table .add-h{text-align:left;padding-left:1px}
.prop-table th:last-child{background:#fff;border-right:0}
.prop-table td{height:19px;padding:0;border-right:1px solid #d9d9d9;border-bottom:1px solid #d9d9d9;line-height:16px;white-space:nowrap;overflow:hidden}
.num{text-align:center;background:#f0f0f0;font-size:12px}
.name{padding-left:19px !important}
.cur .num{background:#fbd79b;color:#55125a}
.cur .name{background:#0078d7;color:#fff}
.dim .name{color:#9a9a9a}
.blue .name{color:#0000e0}
.expand-cell{padding-left:3px !important}
.plusbox{display:inline-block;width:11px;height:11px;border:1px solid #888;line-height:8px;text-align:center;margin-right:6px;color:#222;vertical-align:-1px}

/* status */
.status{height:20px;flex:none;display:flex;gap:2px;background:#f0f0f0;font-family:"Noto Sans Mono CJK SC","Noto Sans CJK SC","Liberation Mono",monospace}
.st{height:19px;background:#f7f7f7;border:1px solid #e0e0e0;padding-left:2px;line-height:17px;white-space:nowrap}
.st1{width:148px}.st2{width:78px}.st3{width:98px}.st4{width:48px}.st5{flex:1}.st6{width:70px}

/* taskbar */
.taskbar{height:40px;flex:none;background:#04141a;display:flex;align-items:stretch;color:#ddd}
.start{width:48px;background:#000;display:flex;align-items:center;justify-content:center}
.start svg{width:16px;height:16px}
.tsearch{width:344px;background:#333;display:flex;align-items:center;padding-left:10px;color:#8a8a8a;font-size:13px}
.cortana{width:19px;height:19px;border:3px solid #eee;border-radius:50%;margin-right:6px}
.mic{margin-left:auto;margin-right:13px;width:14px;height:20px}
.task-apps{display:flex;width:544px;flex:none}
.tapp{width:49px;flex:none;display:flex;align-items:center;justify-content:center;position:relative}
.tapp svg{width:22px;height:22px}
.tapp:nth-child(3){margin-left:4px}
.tapp:nth-child(5){margin-left:5px}
.tview svg{width:20px;height:16px}
.tapp.run::after{content:"";position:absolute;left:4px;right:5px;bottom:0;height:2px;background:#76b9ed}
.tapp.active{background:#30393d}
.tapp.active::after{left:0;right:0}
.tray{flex:1;display:flex;align-items:center;font-size:12px;position:relative}
.tray-link{color:#ccc;margin-left:30px}
.t-wifi{width:19px;height:16px;margin-left:15px}
.t-up{width:12px;height:8px;margin-left:12px}
.t-batt{width:17px;height:16px;margin-left:33px}
.t-net{width:14px;height:16px;margin-left:11px}
.t-vol{width:15px;height:16px;margin-left:9px}
.t-kbd{width:23px;height:16px;margin-left:8px}
.tray-en{margin-left:9px;color:#eee;font-size:13px}
.sogou-tray{margin-left:13px;width:16px;height:18px;background:#ee4a1a;color:#fff;font:bold 13px/18px "Liberation Sans",sans-serif;text-align:center;border-radius:2px;transform:rotate(-8deg)}
.clock{margin-left:auto;display:flex;flex-direction:column;align-items:center;color:#e4e4e4;line-height:20px;margin-right:14px;width:68px}
.notif{width:42px;position:relative;display:flex;justify-content:flex-start}
.notif svg{width:16px;height:16px;margin-bottom:3px}
.notif b{position:absolute;left:9px;top:10px;width:17px;height:17px;border-radius:50%;background:#555;color:#fff;text-align:center;font:bold 12px/17px "Liberation Sans",sans-serif}

/* dialog */
.dialog{position:absolute;left:549px;top:156px;width:817px;height:490px;border:1px solid #2b3a44;border-right:0;border-bottom:2px solid #2b3a44;background:linear-gradient(#97b1cb,#b9d1e9 60px,#b9d1e9);box-shadow:inset 0 -2px 0 #38c4ea;display:flex;flex-direction:column}
.dlg-title{height:30px;flex:none;padding:10px 0 0 8px;line-height:16px;color:#222}
.dlg-body{flex:1;margin-left:7px;background:#efefef;border:1px solid #fff;border-right:0;display:flex;flex-direction:column;margin-bottom:6px;min-height:0}
.radios{height:33px;flex:none;display:flex;align-items:center;padding-left:125px;gap:249px;padding-top:1px}
.radio{display:flex;align-items:center;gap:4px;white-space:nowrap}
.radio i{width:13px;height:13px;border-radius:50%;border:1px solid #555;background:#fff;position:relative;flex:none}
.radio.on i{background:radial-gradient(#333 0 3.500px,#fff 4px)}
.cad{width:809px;height:372px;background:#000;flex:none}
.cad .w{fill:none;stroke:#fff;stroke-width:1}
.cad .r{fill:none;stroke:#f00;stroke-width:2}
.cad .r.thin{stroke-width:1.500}
.cad .rbox{fill:none;stroke:#f00;stroke-width:7}
.cad .dots-y{fill:none;stroke:#ff0;stroke-width:2.500;stroke-dasharray:2.500 8.500}
.cad .dots-m{fill:none;stroke:#f0f;stroke-width:2;stroke-linecap:square}
.cad-num{fill:#fff;font:32px "Liberation Serif",serif}
.cad-big{fill:#fff;font:300 30px "Noto Serif CJK SC","Noto Sans CJK SC",serif}
.cad-g{fill:#0f0;font:14px "Liberation Sans",sans-serif}
.cad-w{fill:#fff;font:12.5px "Noto Sans CJK SC",sans-serif}
.cad-note{fill:#8fa0b8;font:bold 13px "Noto Sans CJK SC",sans-serif}
.dlg-foot{flex:1;display:flex;justify-content:flex-end;align-items:flex-start;padding:11px 6px 0 0}
.rebar-btn{width:73px;height:23px;background:#e2e2e2;border:1px solid #a8a8a8;padding:0}

/* floating desktop widgets */
.badge69{position:absolute;left:1131px;top:-29px;width:48px;height:48px;border-radius:50%;background:linear-gradient(#7ccf6a,#35ac3c);border:3px solid #c8cfca;box-shadow:0 1px 3px #777;color:#fff;font:bold 12px/14px "Liberation Sans",sans-serif;text-align:center}
.badge69 span{position:absolute;left:0;right:0;top:28px}
.sogou{position:absolute;left:726px;top:33px;width:206px;height:24px;background:#eef5fc;border:1px solid #c8dcf0;display:flex;align-items:center;gap:6px;padding-left:6px}
.sogou svg{width:16px;height:16px}
.s-logo{position:absolute;left:-6px;top:-4px;width:27px;height:28px;background:linear-gradient(#f5502a,#e84010);border-radius:3px;transform:rotate(-8deg);color:#fff;font:bold 24px/28px "Liberation Sans",sans-serif;text-align:center}
.s-en{margin-left:20px;color:#1f78d1;font:bold 14px/16px "Noto Sans CJK SC",sans-serif}
.s-dot{color:#1f78d1;font:bold 12px/12px "Liberation Sans",sans-serif;width:13px;margin-left:5px}
.netpill{position:absolute;left:925px;top:21px;width:117px;height:47px;background:#fff;border-radius:24px;box-shadow:0 3px 7px rgba(0,0,0,.25);display:flex;align-items:center;padding-left:3px;gap:6px}
.net-circle{width:38px;height:38px;border-radius:50%;background:#27cd70;display:flex;align-items:center;justify-content:center}
.net-circle svg{width:26px;height:26px}
.net-info{display:flex;flex-direction:column;gap:6px;font-size:11px;color:#777;line-height:14px;padding-top:3px}
.net-row{display:flex;align-items:center;gap:6px;white-space:nowrap}
.net-row svg{width:10px;height:14px}
```
